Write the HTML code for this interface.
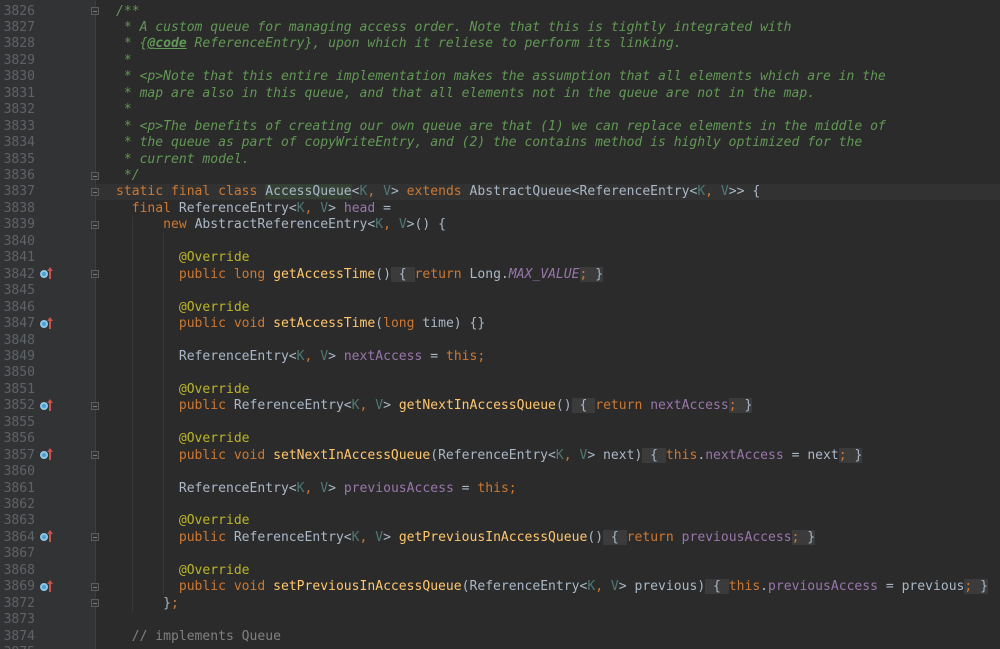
<!DOCTYPE html>
<html><head><meta charset="utf-8"><style>
html,body{margin:0;padding:0;background:#2b2b2b;width:1000px;height:649px;overflow:hidden}
body{position:relative;font-family:"DejaVu Sans Mono","Liberation Mono",monospace;font-size:13.05px;color:#a9b7c6}
#gut{position:absolute;left:0;top:0;width:96px;height:649px;background:#313335}
#gl{position:absolute;left:95px;top:0;width:1px;height:649px;background:#3c3f41}
.l{position:absolute;left:0;width:1000px;height:16.45px;line-height:16.45px}
.n{position:absolute;left:0;top:1.5px;width:35px;text-align:right;color:#606366}
.c{position:absolute;left:116px;top:1.5px;white-space:pre}
.cm{color:#629755;font-style:italic}
.k{color:#cc7832}.a{color:#bbb529}.m{color:#ffc66d}.f{color:#9876aa}.t{color:#507874}
.i{font-style:italic}.g{background:#3b3b3b}.gr{color:#808080}
.cur{position:absolute;left:96px;width:904px;height:16.45px;background:#323232}
.ic{position:absolute;left:40px;top:5px;width:8px;height:8px;border-radius:50%;background:#4a9fd0;box-sizing:border-box;border:2px solid #8fc6e6}
.ar{position:absolute;left:49px;top:3px;width:2px;height:11px;background:#c7524a}
.ar:before{content:"";position:absolute;left:-2px;top:-1px;border-left:3px solid transparent;border-right:3px solid transparent;border-bottom:4px solid #c7524a}
.fd{position:absolute;left:91px;top:5px;width:8px;height:8px;border:1px solid #5a5d5f;background:#313335;box-sizing:border-box}
.fd:after{content:"";position:absolute;left:1px;top:3px;width:4px;height:1px;background:#7a7d7f}
.ig{position:absolute;width:1px;background:#373737}
</style></head><body>
<div id="gut"></div><div id="gl"></div>
<div class="cur" style="top:183.5px"></div>
<div class="ig" style="left:132px;top:216.5px;height:395px"></div>
<div class="ig" style="left:163px;top:233px;height:362px"></div>

<div class="l" style="top:2px"><span class="n">3826</span><span class="fd"></span><span class="c cm">/**</span></div>
<div class="l" style="top:18.45px"><span class="n">3827</span><span class="c cm"> * A custom queue for managing access order. Note that this is tightly integrated with</span></div>
<div class="l" style="top:34.9px"><span class="n">3828</span><span class="c cm"> * {<b style="text-decoration:underline">@code</b> ReferenceEntry}, upon which it reliese to perform its linking.</span></div>
<div class="l" style="top:51.35px"><span class="n">3829</span><span class="c cm"> *</span></div>
<div class="l" style="top:67.8px"><span class="n">3830</span><span class="c cm"> * &lt;p&gt;Note that this entire implementation makes the assumption that all elements which are in the</span></div>
<div class="l" style="top:84.25px"><span class="n">3831</span><span class="c cm"> * map are also in this queue, and that all elements not in the queue are not in the map.</span></div>
<div class="l" style="top:100.7px"><span class="n">3832</span><span class="c cm"> *</span></div>
<div class="l" style="top:117.15px"><span class="n">3833</span><span class="c cm"> * &lt;p&gt;The benefits of creating our own queue are that (1) we can replace elements in the middle of</span></div>
<div class="l" style="top:133.6px"><span class="n">3834</span><span class="c cm"> * the queue as part of copyWriteEntry, and (2) the contains method is highly optimized for the</span></div>
<div class="l" style="top:150.05px"><span class="n">3835</span><span class="c cm"> * current model.</span></div>
<div class="l" style="top:166.5px"><span class="n">3836</span><span class="fd"></span><span class="c cm"> */</span></div>
<div class="l" style="top:182.95px"><span class="n">3837</span><span class="fd"></span><span class="c"><span class="k">static final class </span><span style="background:#344134">AccessQueue</span>&lt;<span class="t">K</span><span class="k">, </span><span class="t">V</span>&gt; <span class="k">extends </span>AbstractQueue&lt;ReferenceEntry&lt;<span class="t">K</span><span class="k">, </span><span class="t">V</span>&gt;&gt; {</span></div>
<div class="l" style="top:199.4px"><span class="n">3838</span><span class="c">  <span class="k">final </span>ReferenceEntry&lt;<span class="t">K</span><span class="k">, </span><span class="t">V</span>&gt; <span class="f">head</span> =</span></div>
<div class="l" style="top:215.85px"><span class="n">3839</span><span class="fd"></span><span class="c">      <span class="k">new </span>AbstractReferenceEntry&lt;<span class="t">K</span><span class="k">, </span><span class="t">V</span>&gt;() {</span></div>
<div class="l" style="top:232.3px"><span class="n">3840</span></div>
<div class="l" style="top:248.75px"><span class="n">3841</span><span class="c">        <span class="a">@Override</span></span></div>
<div class="l" style="top:265.2px"><span class="n">3842</span><span class="ic"></span><span class="ar"></span><span class="fd"></span><span class="c">        <span class="k">public long </span><span class="m">getAccessTime</span>()<span class="g"> { </span><span class="k">return </span>Long.<span class="f i">MAX_VALUE</span><span class="g"><span class="k">;</span> }</span></span></div>
<div class="l" style="top:281.65px"><span class="n">3845</span></div>
<div class="l" style="top:298.1px"><span class="n">3846</span><span class="c">        <span class="a">@Override</span></span></div>
<div class="l" style="top:314.55px"><span class="n">3847</span><span class="ic"></span><span class="ar"></span><span class="c">        <span class="k">public void </span><span class="m">setAccessTime</span>(<span class="k">long </span>time) {}</span></div>
<div class="l" style="top:331px"><span class="n">3848</span></div>
<div class="l" style="top:347.45px"><span class="n">3849</span><span class="c">        ReferenceEntry&lt;<span class="t">K</span><span class="k">, </span><span class="t">V</span>&gt; <span class="f">nextAccess</span> = <span class="k">this;</span></span></div>
<div class="l" style="top:363.9px"><span class="n">3850</span></div>
<div class="l" style="top:380.35px"><span class="n">3851</span><span class="c">        <span class="a">@Override</span></span></div>
<div class="l" style="top:396.8px"><span class="n">3852</span><span class="ic"></span><span class="ar"></span><span class="fd"></span><span class="c">        <span class="k">public </span>ReferenceEntry&lt;<span class="t">K</span><span class="k">, </span><span class="t">V</span>&gt; <span class="m">getNextInAccessQueue</span>()<span class="g"> { </span><span class="k">return </span><span class="f">nextAccess</span><span class="g"><span class="k">;</span> }</span></span></div>
<div class="l" style="top:413.25px"><span class="n">3855</span></div>
<div class="l" style="top:429.7px"><span class="n">3856</span><span class="c">        <span class="a">@Override</span></span></div>
<div class="l" style="top:446.15px"><span class="n">3857</span><span class="ic"></span><span class="ar"></span><span class="fd"></span><span class="c">        <span class="k">public void </span><span class="m">setNextInAccessQueue</span>(ReferenceEntry&lt;<span class="t">K</span><span class="k">, </span><span class="t">V</span>&gt; next)<span class="g"> { </span><span class="k">this</span>.<span class="f">nextAccess</span> = next<span class="g"><span class="k">;</span> }</span></span></div>
<div class="l" style="top:462.6px"><span class="n">3860</span></div>
<div class="l" style="top:479.05px"><span class="n">3861</span><span class="c">        ReferenceEntry&lt;<span class="t">K</span><span class="k">, </span><span class="t">V</span>&gt; <span class="f">previousAccess</span> = <span class="k">this;</span></span></div>
<div class="l" style="top:495.5px"><span class="n">3862</span></div>
<div class="l" style="top:511.95px"><span class="n">3863</span><span class="c">        <span class="a">@Override</span></span></div>
<div class="l" style="top:528.4px"><span class="n">3864</span><span class="ic"></span><span class="ar"></span><span class="fd"></span><span class="c">        <span class="k">public </span>ReferenceEntry&lt;<span class="t">K</span><span class="k">, </span><span class="t">V</span>&gt; <span class="m">getPreviousInAccessQueue</span>()<span class="g"> { </span><span class="k">return </span><span class="f">previousAccess</span><span class="g"><span class="k">;</span> }</span></span></div>
<div class="l" style="top:544.85px"><span class="n">3867</span></div>
<div class="l" style="top:561.3px"><span class="n">3868</span><span class="c">        <span class="a">@Override</span></span></div>
<div class="l" style="top:577.75px"><span class="n">3869</span><span class="ic"></span><span class="ar"></span><span class="fd"></span><span class="c">        <span class="k">public void </span><span class="m">setPreviousInAccessQueue</span>(ReferenceEntry&lt;<span class="t">K</span><span class="k">, </span><span class="t">V</span>&gt; previous)<span class="g"> { </span><span class="k">this</span>.<span class="f">previousAccess</span> = previous<span class="g"><span class="k">;</span> }</span></span></div>
<div class="l" style="top:594.2px"><span class="n">3872</span><span class="fd"></span><span class="c">      }<span class="k">;</span></span></div>
<div class="l" style="top:610.65px"><span class="n">3873</span></div>
<div class="l" style="top:627.1px"><span class="n">3874</span><span class="c gr">  // implements Queue</span></div>
<div class="l" style="top:643.55px"><span class="n">3875</span></div>
</body></html>
